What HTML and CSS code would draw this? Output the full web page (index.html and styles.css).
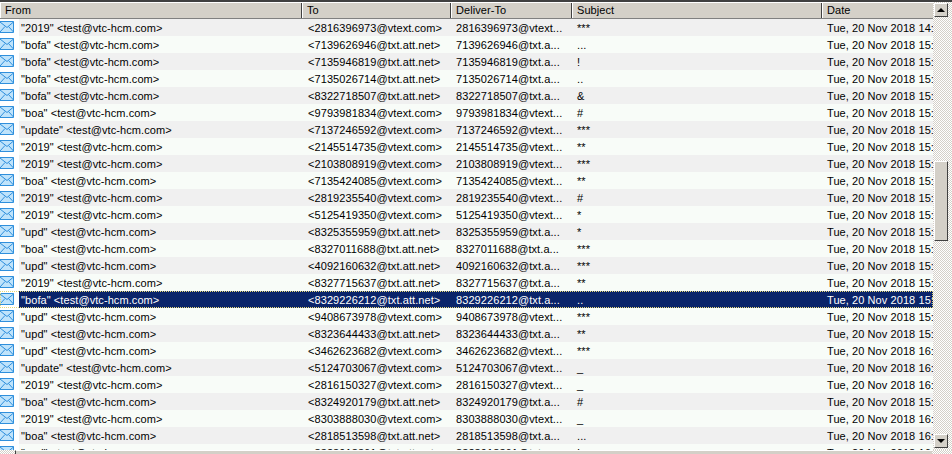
FILE: index.html
```html
<!DOCTYPE html>
<html lang="en">
<head>
  <meta charset="UTF-8" />
  <title>Messages</title>
  <link rel="stylesheet" href="styles.css">
</head>
<body>
  <svg class="defs" width="0" height="0">
    <symbol id="mail" viewBox="0 0 14 12">
      <rect x="0" y="0.5" width="14" height="11" fill="#bfe3fb" />
      <path d="M0 .5h13.5v11H0" fill="none" stroke="#2f8fdc" />
      <path d="M0 1l7 5.5L13.500 1M0 11l5-5.500M13.500 11l-5-5.500" fill="none" stroke="#2f8fdc" />
    </symbol>
  </svg>

  <div class="window">
    <div class="main">
      <div class="list">
        <div class="head">
          <div class="col-from">From</div>
          <div class="col-to">To</div>
          <div class="col-deliver">Deliver-To</div>
          <div class="col-subject">Subject</div>
          <div class="col-date">Date</div>
        </div>
        <div class="rows">
          <div class="row"><svg class="icon"><use href="#mail"/></svg><div class="col-from">"2019" &lt;test@vtc-hcm.com&gt;</div><div class="col-to">&lt;2816396973@vtext.com&gt;</div><div class="col-deliver">2816396973@vtext...</div><div class="col-subject">***</div><div class="col-date">Tue, 20 Nov 2018 14:59:02</div></div>
          <div class="row"><svg class="icon"><use href="#mail"/></svg><div class="col-from">"bofa" &lt;test@vtc-hcm.com&gt;</div><div class="col-to">&lt;7139626946@txt.att.net&gt;</div><div class="col-deliver">7139626946@txt.a...</div><div class="col-subject">...</div><div class="col-date">Tue, 20 Nov 2018 15:31:10</div></div>
          <div class="row"><svg class="icon"><use href="#mail"/></svg><div class="col-from">"bofa" &lt;test@vtc-hcm.com&gt;</div><div class="col-to">&lt;7135946819@txt.att.net&gt;</div><div class="col-deliver">7135946819@txt.a...</div><div class="col-subject">!</div><div class="col-date">Tue, 20 Nov 2018 15:31:22</div></div>
          <div class="row"><svg class="icon"><use href="#mail"/></svg><div class="col-from">"bofa" &lt;test@vtc-hcm.com&gt;</div><div class="col-to">&lt;7135026714@txt.att.net&gt;</div><div class="col-deliver">7135026714@txt.a...</div><div class="col-subject">..</div><div class="col-date">Tue, 20 Nov 2018 15:31:40</div></div>
          <div class="row"><svg class="icon"><use href="#mail"/></svg><div class="col-from">"bofa" &lt;test@vtc-hcm.com&gt;</div><div class="col-to">&lt;8322718507@txt.att.net&gt;</div><div class="col-deliver">8322718507@txt.a...</div><div class="col-subject">&amp;</div><div class="col-date">Tue, 20 Nov 2018 15:32:05</div></div>
          <div class="row"><svg class="icon"><use href="#mail"/></svg><div class="col-from">"boa" &lt;test@vtc-hcm.com&gt;</div><div class="col-to">&lt;9793981834@vtext.com&gt;</div><div class="col-deliver">9793981834@vtext...</div><div class="col-subject">#</div><div class="col-date">Tue, 20 Nov 2018 15:33:11</div></div>
          <div class="row"><svg class="icon"><use href="#mail"/></svg><div class="col-from">"update" &lt;test@vtc-hcm.com&gt;</div><div class="col-to">&lt;7137246592@vtext.com&gt;</div><div class="col-deliver">7137246592@vtext...</div><div class="col-subject">***</div><div class="col-date">Tue, 20 Nov 2018 15:33:30</div></div>
          <div class="row"><svg class="icon"><use href="#mail"/></svg><div class="col-from">"2019" &lt;test@vtc-hcm.com&gt;</div><div class="col-to">&lt;2145514735@vtext.com&gt;</div><div class="col-deliver">2145514735@vtext...</div><div class="col-subject">**</div><div class="col-date">Tue, 20 Nov 2018 15:34:02</div></div>
          <div class="row"><svg class="icon"><use href="#mail"/></svg><div class="col-from">"2019" &lt;test@vtc-hcm.com&gt;</div><div class="col-to">&lt;2103808919@vtext.com&gt;</div><div class="col-deliver">2103808919@vtext...</div><div class="col-subject">***</div><div class="col-date">Tue, 20 Nov 2018 15:35:18</div></div>
          <div class="row"><svg class="icon"><use href="#mail"/></svg><div class="col-from">"boa" &lt;test@vtc-hcm.com&gt;</div><div class="col-to">&lt;7135424085@vtext.com&gt;</div><div class="col-deliver">7135424085@vtext...</div><div class="col-subject">**</div><div class="col-date">Tue, 20 Nov 2018 15:36:44</div></div>
          <div class="row"><svg class="icon"><use href="#mail"/></svg><div class="col-from">"2019" &lt;test@vtc-hcm.com&gt;</div><div class="col-to">&lt;2819235540@vtext.com&gt;</div><div class="col-deliver">2819235540@vtext...</div><div class="col-subject">#</div><div class="col-date">Tue, 20 Nov 2018 15:51:09</div></div>
          <div class="row"><svg class="icon"><use href="#mail"/></svg><div class="col-from">"2019" &lt;test@vtc-hcm.com&gt;</div><div class="col-to">&lt;5125419350@vtext.com&gt;</div><div class="col-deliver">5125419350@vtext...</div><div class="col-subject">*</div><div class="col-date">Tue, 20 Nov 2018 15:52:27</div></div>
          <div class="row"><svg class="icon"><use href="#mail"/></svg><div class="col-from">"upd" &lt;test@vtc-hcm.com&gt;</div><div class="col-to">&lt;8325355959@txt.att.net&gt;</div><div class="col-deliver">8325355959@txt.a...</div><div class="col-subject">*</div><div class="col-date">Tue, 20 Nov 2018 15:53:01</div></div>
          <div class="row"><svg class="icon"><use href="#mail"/></svg><div class="col-from">"boa" &lt;test@vtc-hcm.com&gt;</div><div class="col-to">&lt;8327011688@txt.att.net&gt;</div><div class="col-deliver">8327011688@txt.a...</div><div class="col-subject">***</div><div class="col-date">Tue, 20 Nov 2018 15:54:13</div></div>
          <div class="row"><svg class="icon"><use href="#mail"/></svg><div class="col-from">"upd" &lt;test@vtc-hcm.com&gt;</div><div class="col-to">&lt;4092160632@txt.att.net&gt;</div><div class="col-deliver">4092160632@txt.a...</div><div class="col-subject">***</div><div class="col-date">Tue, 20 Nov 2018 15:55:36</div></div>
          <div class="row"><svg class="icon"><use href="#mail"/></svg><div class="col-from">"2019" &lt;test@vtc-hcm.com&gt;</div><div class="col-to">&lt;8327715637@txt.att.net&gt;</div><div class="col-deliver">8327715637@txt.a...</div><div class="col-subject">**</div><div class="col-date">Tue, 20 Nov 2018 15:56:48</div></div>
          <div class="row selected"><svg class="icon"><use href="#mail"/></svg><div class="col-from">"bofa" &lt;test@vtc-hcm.com&gt;</div><div class="col-to">&lt;8329226212@txt.att.net&gt;</div><div class="col-deliver">8329226212@txt.a...</div><div class="col-subject">..</div><div class="col-date">Tue, 20 Nov 2018 15:57:05</div></div>
          <div class="row"><svg class="icon"><use href="#mail"/></svg><div class="col-from">"upd" &lt;test@vtc-hcm.com&gt;</div><div class="col-to">&lt;9408673978@vtext.com&gt;</div><div class="col-deliver">9408673978@vtext...</div><div class="col-subject">***</div><div class="col-date">Tue, 20 Nov 2018 15:58:19</div></div>
          <div class="row"><svg class="icon"><use href="#mail"/></svg><div class="col-from">"upd" &lt;test@vtc-hcm.com&gt;</div><div class="col-to">&lt;8323644433@txt.att.net&gt;</div><div class="col-deliver">8323644433@txt.a...</div><div class="col-subject">**</div><div class="col-date">Tue, 20 Nov 2018 15:59:02</div></div>
          <div class="row"><svg class="icon"><use href="#mail"/></svg><div class="col-from">"upd" &lt;test@vtc-hcm.com&gt;</div><div class="col-to">&lt;3462623682@vtext.com&gt;</div><div class="col-deliver">3462623682@vtext...</div><div class="col-subject">***</div><div class="col-date">Tue, 20 Nov 2018 16:00:31</div></div>
          <div class="row"><svg class="icon"><use href="#mail"/></svg><div class="col-from">"update" &lt;test@vtc-hcm.com&gt;</div><div class="col-to">&lt;5124703067@vtext.com&gt;</div><div class="col-deliver">5124703067@vtext...</div><div class="col-subject">_</div><div class="col-date">Tue, 20 Nov 2018 16:01:12</div></div>
          <div class="row"><svg class="icon"><use href="#mail"/></svg><div class="col-from">"2019" &lt;test@vtc-hcm.com&gt;</div><div class="col-to">&lt;2816150327@vtext.com&gt;</div><div class="col-deliver">2816150327@vtext...</div><div class="col-subject">_</div><div class="col-date">Tue, 20 Nov 2018 16:02:40</div></div>
          <div class="row"><svg class="icon"><use href="#mail"/></svg><div class="col-from">"boa" &lt;test@vtc-hcm.com&gt;</div><div class="col-to">&lt;8324920179@txt.att.net&gt;</div><div class="col-deliver">8324920179@txt.a...</div><div class="col-subject">#</div><div class="col-date">Tue, 20 Nov 2018 15:59:48</div></div>
          <div class="row"><svg class="icon"><use href="#mail"/></svg><div class="col-from">"2019" &lt;test@vtc-hcm.com&gt;</div><div class="col-to">&lt;8303888030@vtext.com&gt;</div><div class="col-deliver">8303888030@vtext...</div><div class="col-subject">_</div><div class="col-date">Tue, 20 Nov 2018 16:03:25</div></div>
          <div class="row"><svg class="icon"><use href="#mail"/></svg><div class="col-from">"boa" &lt;test@vtc-hcm.com&gt;</div><div class="col-to">&lt;2818513598@txt.att.net&gt;</div><div class="col-deliver">2818513598@txt.a...</div><div class="col-subject">...</div><div class="col-date">Tue, 20 Nov 2018 16:10:07</div></div>
          <div class="row"><svg class="icon"><use href="#mail"/></svg><div class="col-from">"upd" &lt;test@vtc-hcm.com&gt;</div><div class="col-to">&lt;8323918361@txt.att.net&gt;</div><div class="col-deliver">8323918361@txt.a...</div><div class="col-subject">!</div><div class="col-date">Tue, 20 Nov 2018 16:11:19</div></div>
        </div>
      </div>
      <div class="vscroll">
        <div class="btn"><span class="arrow-up"></span></div>
        <div class="vtrack"><div class="vthumb"></div></div>
        <div class="btn"><span class="arrow-down"></span></div>
      </div>
    </div>
    <div class="hscroll"><div class="hthumb"></div></div>
  </div>
</body>
</html>
```

FILE: styles.css
```css
html, body {
  margin: 0;
  padding: 0;
  background: #fff;
}
.defs {
  display: none;
}
.window {
  width: 952px;
  height: 454px;
  overflow: hidden;
  display: flex;
  flex-direction: column;
  font-family: "Liberation Sans", Arial, sans-serif;
  font-size: 11px;
  letter-spacing: 0.08px;
  color: #000;
  box-sizing: border-box;
  border-top: 2px solid #404040;
}
.main {
  flex: 1;
  min-height: 0;
  display: flex;
}
.list {
  width: 933px;
  overflow: hidden;
}
.head, .row {
  display: flex;
  white-space: nowrap;
}
.head > div, .row > div {
  overflow: hidden;
  box-sizing: border-box;
  padding-left: 5px;
}
.col-from { width: 302px; }
.col-to { width: 149px; }
.col-deliver { width: 121px; }
.col-subject { width: 250px; }
.col-date { width: 111px; }

.head {
  height: 17px;
  line-height: 15px;
  background: #d4d0c8;
  border-top: 1px solid #fff;
  box-sizing: border-box;
  border-bottom: 1px solid #808080;
}
.head > div {
  border-left: 1px solid #fff;
  border-right: 1px solid #404040;
  padding-left: 4px;
}
.head .col-date {
  border-right: 0;
}

.row {
  height: 17px;
  line-height: 18px;
  background: #f8fcf8;
}
.row:nth-child(odd) {
  background: #f0f0f0;
}
/* icon sits on a white strip left of the row colour */
.row .icon {
  flex: none;
  width: 14px;
  height: 12px;
  padding: 2px 5px 3px 0;
  background: #fff;
}
.row .col-from {
  width: 283px;
  padding-left: 2px;
}
.row .col-to {
  padding-left: 6px;
}
.row.selected {
  background: #0a246a;
  color: #fff;
  outline: 1px dotted #e8d878;
  outline-offset: -1px;
}

.vscroll {
  width: 19px;
  display: flex;
  flex-direction: column;
  background: repeating-conic-gradient(#d4d0c8 0 25%, #fff 0 50%) 0 0 / 2px 2px;
  padding: 1px 4px 2px 1px;
  box-sizing: border-box;
}
.btn {
  flex: none;
  height: 14px;
  background: #d4d0c8;
  border: 1px solid;
  border-color: #fff #404040 #404040 #fff;
  display: flex;
  align-items: center;
  justify-content: center;
  box-sizing: border-box;
}
.arrow-up, .arrow-down {
  width: 0;
  height: 0;
  border-left: 4px solid transparent;
  border-right: 4px solid transparent;
}
.arrow-up {
  border-bottom: 4px solid #000;
}
.arrow-down {
  border-top: 4px solid #000;
}
.vtrack {
  flex: 1;
  padding-top: 144px;
}
.vthumb {
  height: 80px;
  background: #d4d0c8;
  border: 1px solid;
  border-color: #fff #404040 #404040 #fff;
  box-sizing: border-box;
}
.hscroll {
  flex: none;
  height: 4px;
  padding-left: 15px;
  background: repeating-conic-gradient(#d4d0c8 0 25%, #fff 0 50%) 0 0 / 2px 2px;
}
.hthumb {
  width: 917px;
  height: 4px;
  background: #d4d0c8;
  border-left: 1px solid #404040;
  border-top: 1px solid #fff;
  box-sizing: border-box;
}
```
